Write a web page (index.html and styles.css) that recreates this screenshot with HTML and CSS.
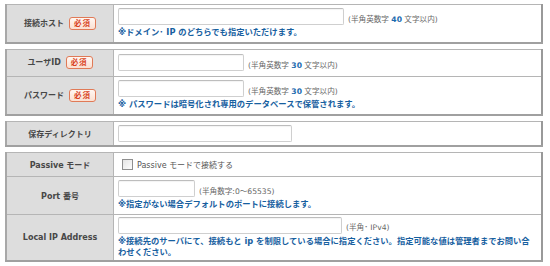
FILE: index.html
```html
<!DOCTYPE html>
<html lang="ja">
<head>
<meta charset="utf-8">
<link rel="stylesheet" href="styles.css">
</head>
<body>
<div class="page">
  <table class="grp">
    <tr class="h39">
      <th>接続ホスト <span class="req">必須</span></th>
      <td>
        <div class="line"><span class="inp w226"></span><span class="hint">(半角英数字 <b>40</b> 文字以内)</span></div>
        <div class="note">※ドメイン･ IP のどちらでも指定いただけます。</div>
      </td>
    </tr>
  </table>
  <table class="grp">
    <tr class="h28">
      <th>ユーザID <span class="req">必須</span></th>
      <td>
        <div class="line"><span class="inp w126"></span><span class="hint">(半角英数字 <b>30</b> 文字以内)</span></div>
      </td>
    </tr>
    <tr class="h40">
      <th>パスワード <span class="req">必須</span></th>
      <td>
        <div class="line"><span class="inp w126"></span><span class="hint">(半角英数字 <b>30</b> 文字以内)</span></div>
        <div class="note">※ パスワードは暗号化され専用のデータベースで保管されます。</div>
      </td>
    </tr>
  </table>
  <table class="grp">
    <tr class="h25">
      <th>保存ディレクトリ</th>
      <td>
        <div class="line"><span class="inp w174"></span></div>
      </td>
    </tr>
  </table>
  <table class="grp">
    <tr class="h25">
      <th>Passive モード</th>
      <td>
        <label class="chk"><span class="box"></span><span class="chk-text">Passive モードで接続する</span></label>
      </td>
    </tr>
    <tr class="h39">
      <th>Port 番号</th>
      <td>
        <div class="line"><span class="inp w77"></span><span class="hint">(半角数字:0～65535)</span></div>
        <div class="note">※指定がない場合デフォルトのポートに接続します。</div>
      </td>
    </tr>
    <tr class="h47">
      <th>Local IP Address</th>
      <td>
        <div class="line"><span class="inp w224"></span><span class="hint">(半角･ IPv4)</span></div>
        <div class="note">※接続先のサーバにて、接続もと ip を制限している場合に指定ください。指定可能な値は管理者までお問い合わせください。</div>
      </td>
    </tr>
  </table>
</div>
</body>
</html>
```
FILE: styles.css
```css
html, body {
  margin: 0;
  padding: 0;
  background: #fff;
}
body {
  font-family: "DejaVu Sans", "Noto Sans CJK JP", sans-serif;
  color: #444;
}
.page {
  padding: 4px 0 0 5px;
  width: 538px;
}
.grp {
  width: 538px;
  border-collapse: collapse;
  border-top: 1px solid #b5b5b5;
  border-left: 2px solid #a8a8a8;
  border-right: 2px solid #999;
  border-bottom: 2px solid #a0a0a0;
  margin-bottom: 5px;
  table-layout: fixed;
}
.grp tr + tr th,
.grp tr + tr td {
  border-top: 1px solid #b5b5b5;
}
.grp th {
  width: 106px;
  background: #dddddd;
  border-right: 1px solid #b5b5b5;
  font-size: 8px;
  font-weight: bold;
  color: #474747;
  text-align: center;
  vertical-align: middle;
  padding: 0;
  white-space: nowrap;
}
.grp td {
  padding: 0 0 0 4px;
  vertical-align: middle;
  background: #fff;
}
.h25 { height: 24px; }
.h28 { height: 27px; }
.h39 { height: 38px; }
.h40 { height: 39px; }
.h47 { height: 47px; }

.req {
  display: inline-block;
  vertical-align: middle;
  margin-left: 2px;
  padding: 0 4px;
  height: 11px;
  line-height: 11px;
  font-size: 7.5px;
  letter-spacing: 1px;
  font-weight: bold;
  color: #d9431d;
  background: linear-gradient(#fff7f2, #fbe0d2);
  border: 1px solid #e07a57;
  border-radius: 3px;
}
.line {
  display: flex;
  align-items: center;
  height: 17px;
}
.inp {
  display: inline-block;
  box-sizing: border-box;
  height: 17px;
  border: 1px solid #cfcfcf;
  border-top-color: #bdbdbd;
  border-radius: 2px;
  background: #fff;
  box-shadow: inset 0 1px 1px rgba(0,0,0,0.05);
}
.w226 { width: 226px; }
.w126 { width: 126px; }
.w174 { width: 174px; }
.w77 { width: 77px; }
.w224 { width: 224px; }
.hint {
  margin-left: 4px;
  margin-top: 3px;
  font-size: 7.6px;
  color: #666;
  white-space: nowrap;
}
.hint b {
  color: #1b6aae;
  font-weight: bold;
}
.note {
  margin-top: 2px;
  font-size: 8.3px;
  line-height: 11px;
  font-weight: bold;
  color: #17609f;
  padding-right: 6px;
}
.chk {
  display: flex;
  align-items: center;
  margin-left: 4px;
}
.box {
  width: 9px;
  height: 9px;
  border: 1px solid #8f8f8f;
  background: linear-gradient(135deg, #e4e4e4, #fdfdfd);
  margin-right: 4px;
}
.chk-text {
  font-size: 8px;
  color: #555;
}
```
